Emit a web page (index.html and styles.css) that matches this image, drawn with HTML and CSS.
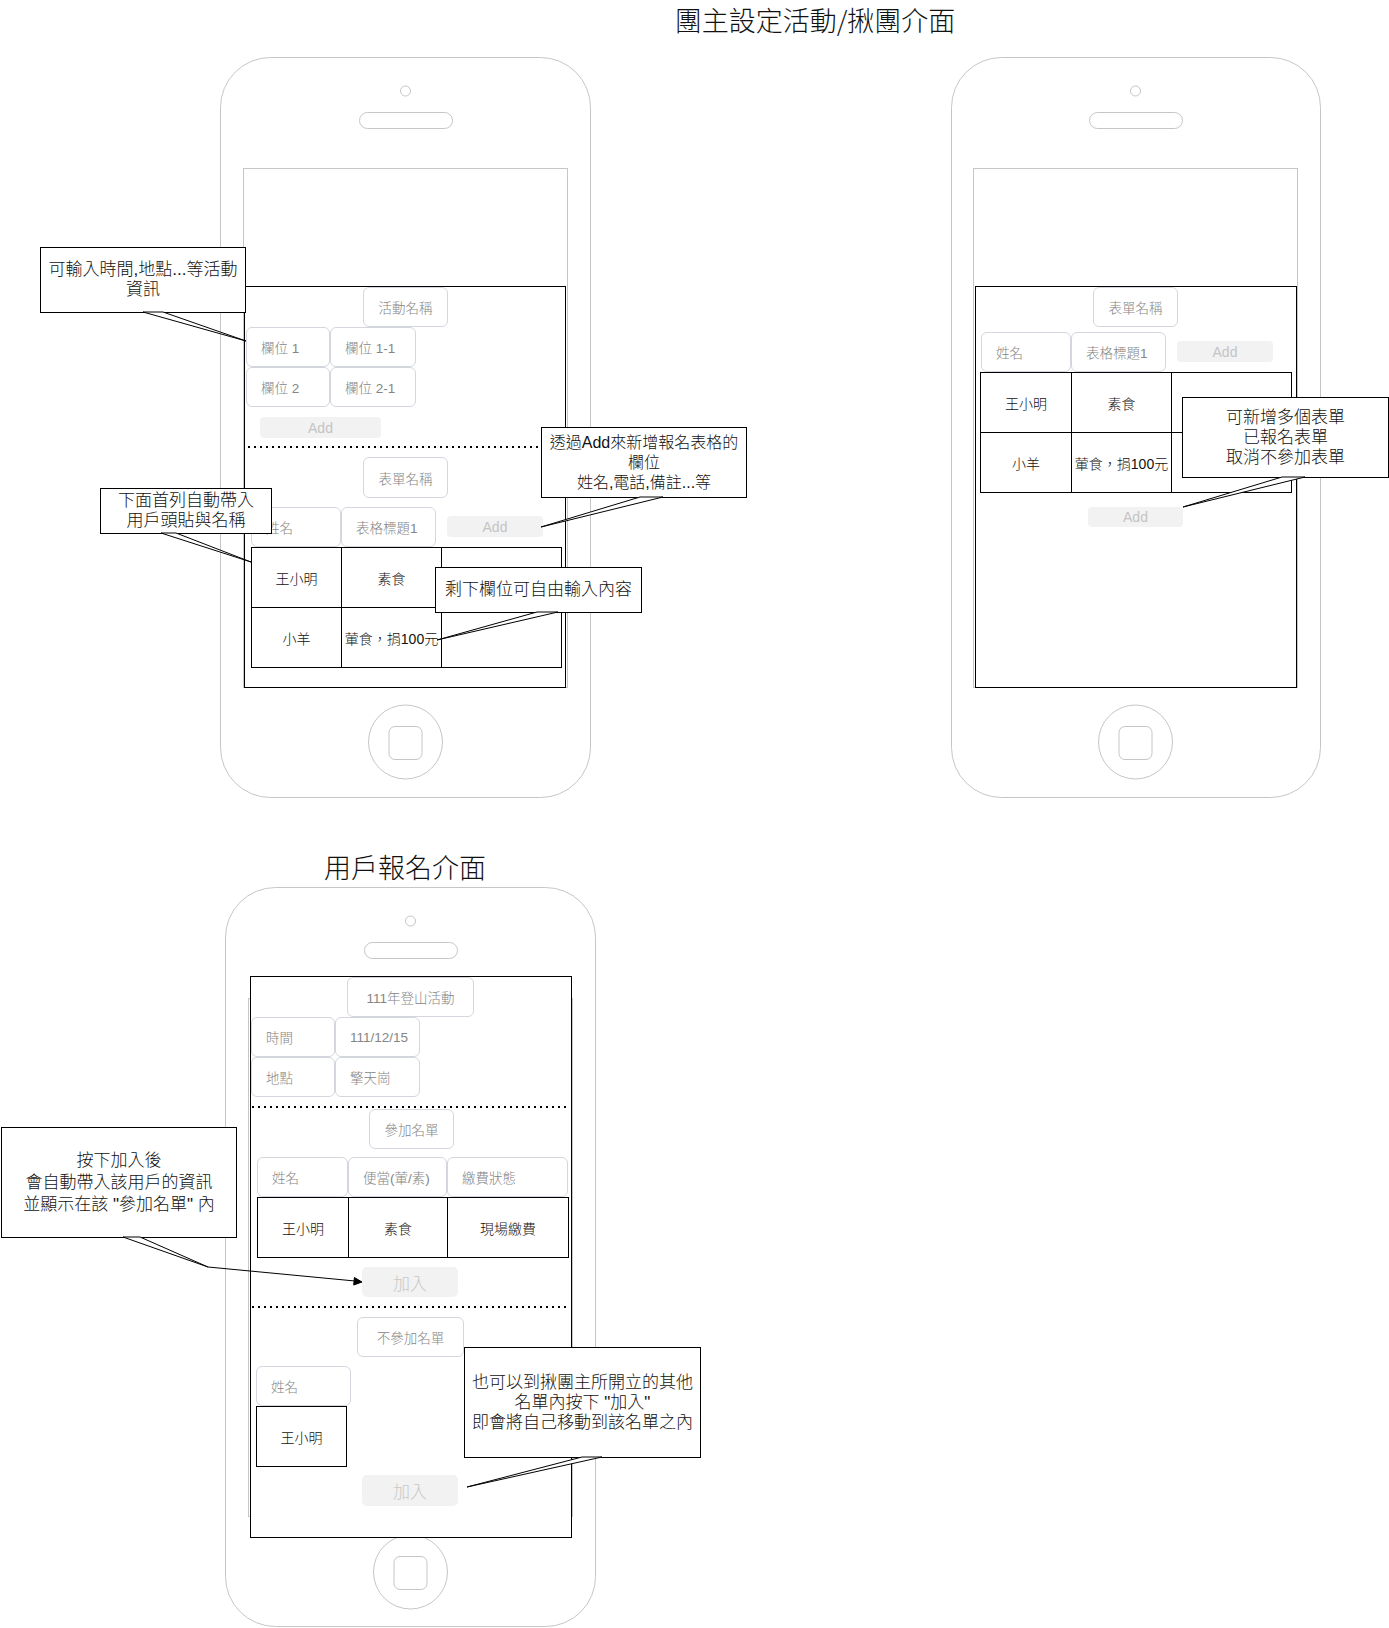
FILE: index.html
```html
<!DOCTYPE html>
<html lang="zh-Hant">
<head>
<meta charset="utf-8">
<title>團主設定活動/揪團介面</title>
<link rel="stylesheet" href="styles.css">
</head>
<body>
<div class="canvas">

  <div class="title t1">團主設定活動/揪團介面</div>
  <div class="title t2">用戶報名介面</div>

  <!-- phones -->
  <svg class="phone ph1" width="371" height="741" viewBox="0 0 371 741">
    <rect x="0.5" y="0.5" width="370" height="740" rx="50" class="ps body"/>
    <circle cx="185.5" cy="34" r="5" class="ps"/>
    <rect x="139.5" y="55.5" width="93" height="16" rx="8" class="ps"/>
    <rect x="23.5" y="111.5" width="324" height="519" class="ps"/>
    <circle cx="185.5" cy="685" r="37" class="ps"/>
    <rect x="169" y="669.5" width="33" height="33" rx="6" class="ps"/>
  </svg>
  <svg class="phone ph2" width="371" height="741" viewBox="0 0 371 741">
    <rect x="0.5" y="0.5" width="369" height="740" rx="50" class="ps body"/>
    <circle cx="184.5" cy="34" r="5" class="ps"/>
    <rect x="138.5" y="55.5" width="93" height="16" rx="8" class="ps"/>
    <rect x="22.5" y="111.5" width="324" height="519" class="ps"/>
    <circle cx="184.5" cy="685" r="37" class="ps"/>
    <rect x="168" y="669.5" width="33" height="33" rx="6" class="ps"/>
  </svg>
  <svg class="phone ph3" width="371" height="741" viewBox="0 0 371 741">
    <rect x="0.5" y="0.5" width="370" height="739" rx="50" class="ps body"/>
    <circle cx="185.5" cy="34" r="5" class="ps"/>
    <rect x="139.5" y="55.5" width="93" height="16" rx="8" class="ps"/>
    <rect x="23.5" y="111.5" width="324" height="518" class="ps"/>
    <circle cx="185.5" cy="685" r="37" class="ps"/>
    <rect x="169" y="669.5" width="33" height="33" rx="6" class="ps"/>
  </svg>

  <!-- frames -->
  <div class="frame fr1"></div>
  <div class="frame fr2"></div>
  <div class="frame fr3"></div>

  <!-- phone 1 -->
  <div class="fld c a1">活動名稱</div>
  <div class="fld a2">欄位 1</div>
  <div class="fld a3">欄位 1-1</div>
  <div class="fld a4">欄位 2</div>
  <div class="fld a5">欄位 2-1</div>
  <div class="btn a6">Add</div>
  <div class="fld c a7">表單名稱</div>
  <div class="fld a8">姓名</div>
  <div class="fld a9">表格標題1</div>
  <div class="btn a10">Add</div>
  <table class="tbl tb1">
    <tr><td class="w90">王小明</td><td class="w100">素食</td><td class="w120"></td></tr>
    <tr><td>小羊</td><td>葷食，捐100元</td><td></td></tr>
  </table>

  <!-- phone 2 -->
  <div class="fld c b1">表單名稱</div>
  <div class="fld b2">姓名</div>
  <div class="fld b3">表格標題1</div>
  <div class="btn b4">Add</div>
  <table class="tbl tb2">
    <tr><td class="w91">王小明</td><td class="w100">素食</td><td class="w120"></td></tr>
    <tr><td>小羊</td><td>葷食，捐100元</td><td></td></tr>
  </table>
  <div class="btn b5">Add</div>

  <!-- phone 3 -->
  <div class="fld c d1">111年登山活動</div>
  <div class="fld d2">時間</div>
  <div class="fld d3">111/12/15</div>
  <div class="fld d4">地點</div>
  <div class="fld d5">擎天崗</div>
  <div class="fld c d6">參加名單</div>
  <div class="fld d7">姓名</div>
  <div class="fld d8">便當(葷/素)</div>
  <div class="fld d9">繳費狀態</div>
  <table class="tbl tb3">
    <tr><td class="w91">王小明</td><td class="w99">素食</td><td class="w121">現場繳費</td></tr>
  </table>
  <div class="btn big d10">加入</div>
  <div class="fld c d11">不參加名單</div>
  <div class="fld d12">姓名</div>
  <table class="tbl tb4">
    <tr><td class="w90">王小明</td></tr>
  </table>
  <div class="btn big d13">加入</div>

  <!-- callouts -->
  <div class="callout c1">可輸入時間,地點...等活動<br>資訊</div>
  <div class="callout c2">下面首列自動帶入<br>用戶頭貼與名稱</div>
  <div class="callout c3">透過Add來新增報名表格的<br>欄位<br>姓名,電話,備註...等</div>
  <div class="callout c4">剩下欄位可自由輸入內容</div>
  <div class="callout c5">可新增多個表單<br>已報名表單<br>取消不參加表單</div>
  <div class="callout c6">按下加入後<br>會自動帶入該用戶的資訊<br>並顯示在該 "參加名單" 內</div>
  <div class="callout c7">也可以到揪團主所開立的其他<br>名單內按下 "加入"<br>即會將自己移動到該名單之內</div>

  <!-- overlay: dotted separators, pointers, arrow -->
  <svg class="overlay" width="1389" height="1628" viewBox="0 0 1389 1628">
    <line x1="248" y1="447" x2="540" y2="447" class="dot"/>
    <line x1="252" y1="1107" x2="566" y2="1107" class="dot"/>
    <line x1="252" y1="1307" x2="568" y2="1307" class="dot"/>

    <polygon points="143,312 246,341 163,312" class="ptr"/>
    <polygon points="161,533 251,562 176,533" class="ptr"/>
    <polygon points="640,497 541,527 663,497" class="ptr"/>
    <polygon points="537,612 437,640 558,612" class="ptr"/>
    <polygon points="1282,477 1183,507 1305,477" class="ptr"/>
    <polygon points="123,1237 208,1267 140,1237" class="ptr"/>
    <polygon points="582,1457 467,1487 602,1457" class="ptr"/>

    <line x1="208" y1="1267" x2="355" y2="1281" class="arr"/>
    <polygon points="362,1282 353.7,1285 354.4,1277.5" class="head"/>
  </svg>
</div>
</body>
</html>
```

FILE: styles.css
```css
html, body {
  margin: 0;
  padding: 0;
  background: #ffffff;
}

.canvas {
  position: relative;
  width: 1389px;
  height: 1628px;
  overflow: hidden;
  font-family: "Liberation Sans", "Noto Sans CJK TC", sans-serif;
  color: #000;
}

.title {
  position: absolute;
  height: 40px;
  line-height: 40px;
  text-align: center;
  font-family: "Noto Sans CJK TC", sans-serif;
  font-weight: 300;
  font-size: 27px;
  color: #111;
  white-space: nowrap;
}
.t1 { left: 615px; top: 0px; width: 400px; }
.t2 { left: 255px; top: 847px; width: 300px; }

.phone { position: absolute; }
.ph1 { left: 220px; top: 57px; }
.ph2 { left: 951px; top: 57px; }
.ph3 { left: 225px; top: 887px; }
.ps { fill: none; stroke: #c6c6c6; stroke-width: 1; }
.ps.body { fill: #fff; }

.frame {
  position: absolute;
  box-sizing: border-box;
  border: 1px solid #000;
  background: #fff;
}
.fr1 { left: 244px; top: 286px; width: 322px; height: 402px; }
.fr2 { left: 975px; top: 286px; width: 322px; height: 402px; }
.fr3 { left: 250px; top: 976px; width: 322px; height: 562px; }

/* input-like field boxes */
.fld {
  position: absolute;
  box-sizing: border-box;
  border: 1px solid #d3d7dd;
  border-radius: 6px;
  background: #fff;
  color: #858585;
  font-size: 13.5px;
  font-weight: 300;
  display: flex;
  align-items: center;
  padding-left: 14px;
  white-space: nowrap;
}
.fld.c { justify-content: center; padding-left: 0; }

.btn {
  position: absolute;
  box-sizing: border-box;
  border-radius: 4px;
  background: #f2f2f2;
  color: #c4c4c4;
  font-size: 14px;
  display: flex;
  align-items: center;
  justify-content: center;
}
.btn.big { font-size: 17px; color: #c8c8c8; border-radius: 5px; font-weight: 300; }

/* phone 1 */
.a1 { left: 363px; top: 287px; width: 85px; height: 40px; }
.a2 { left: 246px; top: 327px; width: 84px; height: 40px; }
.a3 { left: 330px; top: 327px; width: 86px; height: 40px; }
.a4 { left: 246px; top: 367px; width: 84px; height: 40px; }
.a5 { left: 330px; top: 367px; width: 86px; height: 40px; }
.a6 { left: 260px; top: 417px; width: 121px; height: 21px; }
.a7 { left: 363px; top: 457px; width: 85px; height: 41px; }
.a8 { left: 251px; top: 507px; width: 90px; height: 40px; }
.a9 { left: 341px; top: 507px; width: 95px; height: 40px; }
.a10 { left: 447px; top: 516px; width: 96px; height: 21px; }

/* phone 2 */
.b1 { left: 1093px; top: 287px; width: 85px; height: 40px; }
.b2 { left: 981px; top: 332px; width: 90px; height: 40px; }
.b3 { left: 1071px; top: 332px; width: 95px; height: 40px; }
.b4 { left: 1177px; top: 341px; width: 96px; height: 21px; }
.b5 { left: 1088px; top: 507px; width: 95px; height: 20px; }

/* phone 3 */
.d1 { left: 347px; top: 977px; width: 127px; height: 40px; }
.d2 { left: 251px; top: 1017px; width: 84px; height: 40px; }
.d3 { left: 335px; top: 1017px; width: 85px; height: 40px; }
.d4 { left: 251px; top: 1057px; width: 84px; height: 40px; }
.d5 { left: 335px; top: 1057px; width: 85px; height: 40px; }
.d6 { left: 369px; top: 1109px; width: 85px; height: 40px; }
.d7 { left: 257px; top: 1157px; width: 91px; height: 40px; }
.d8 { left: 348px; top: 1157px; width: 99px; height: 40px; }
.d9 { left: 447px; top: 1157px; width: 121px; height: 40px; }
.d10 { left: 362px; top: 1267px; width: 96px; height: 30px; }
.d11 { left: 357px; top: 1317px; width: 107px; height: 40px; }
.d12 { left: 256px; top: 1366px; width: 95px; height: 40px; }
.d13 { left: 362px; top: 1475px; width: 96px; height: 31px; }

/* tables */
.tbl {
  position: absolute;
  border-collapse: collapse;
  table-layout: fixed;
  background: #fff;
}
.tbl td {
  border: 1px solid #000;
  height: 59px;
  padding: 0;
  text-align: center;
  vertical-align: middle;
  font-size: 14px;
  font-weight: 300;
  color: #111;
  white-space: nowrap;
}
.w90 { width: 89px; }
.w91 { width: 90px; }
.w99 { width: 98px; }
.w100 { width: 99px; }
.w120 { width: 119px; }
.w121 { width: 120px; }
.tb1 { left: 251px; top: 547px; }
.tb2 { left: 980px; top: 372px; }
.tb3 { left: 257px; top: 1197px; }
.tb4 { left: 256px; top: 1406px; }

/* callouts */
.callout {
  position: absolute;
  box-sizing: border-box;
  border: 1px solid #000;
  background: #fff;
  font-size: 17px;
  font-weight: 300;
  line-height: 20px;
  color: #111;
  display: flex;
  align-items: center;
  justify-content: center;
  text-align: center;
  white-space: nowrap;
}
.c1 { left: 40px; top: 247px; width: 206px; height: 66px; }
.c2 { left: 100px; top: 488px; width: 172px; height: 46px; }
.c3 { left: 541px; top: 427px; width: 206px; height: 71px; font-size: 16px; }
.c4 { left: 435px; top: 567px; width: 207px; height: 46px; }
.c5 { left: 1182px; top: 397px; width: 207px; height: 81px; }
.c6 { left: 1px; top: 1127px; width: 236px; height: 111px; line-height: 22px; }
.c7 { left: 464px; top: 1347px; width: 237px; height: 111px; }

.overlay {
  position: absolute;
  left: 0;
  top: 0;
  pointer-events: none;
}
.dot { stroke: #000; stroke-width: 2; stroke-dasharray: 2 4; }
.ptr { fill: #fff; stroke: #000; stroke-width: 1; }
.arr { stroke: #000; stroke-width: 1; }
.head { fill: #000; stroke: #000; stroke-width: 1; }
```
